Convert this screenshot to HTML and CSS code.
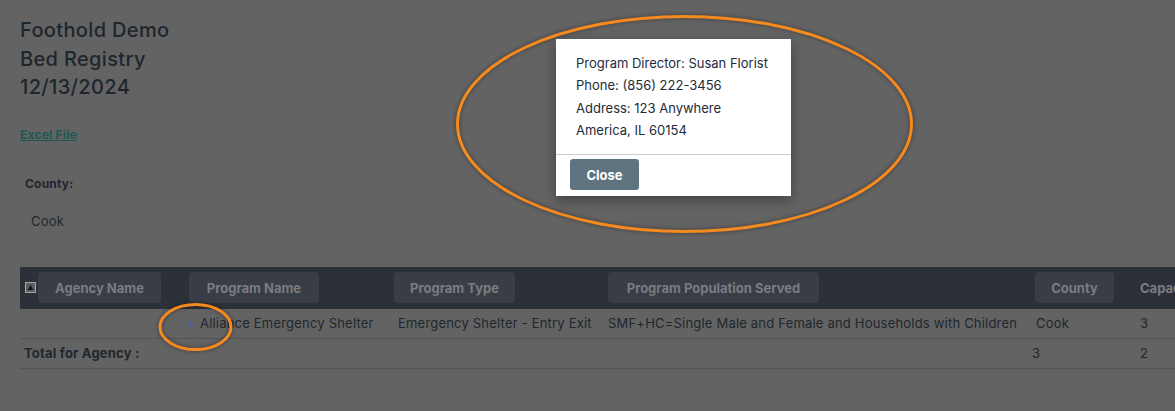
FILE: index.html
```html
<!DOCTYPE html>
<html>
<head>
<meta charset="utf-8">
<link rel="stylesheet" href="styles.css">
</head>
<body>
<div class="page">
  <div class="title">
    <div>Foothold Demo</div>
    <div>Bed Registry</div>
    <div>12/13/2024</div>
  </div>
  <a class="excel" href="#">Excel File</a>
  <div class="county-label">County:</div>
  <div class="county-value">Cook</div>

  <div class="grid">
    <div class="th c1">
      <span class="sort"><svg width="11" height="11" viewBox="0 0 11 11"><rect x="0.5" y="0.5" width="10" height="10" fill="#5a5d62" stroke="#a3a5a8"/><path d="M5.5 2.8 L8.3 8 L2.7 8 Z" fill="#141618"/></svg></span>
      <span class="btn b1">Agency Name</span>
    </div>
    <div class="th c2"><span class="btn b2">Program Name</span></div>
    <div class="th c3"><span class="btn b3">Program Type</span></div>
    <div class="th c4"><span class="btn b4">Program Population Served</span></div>
    <div class="th c5"><span class="btn b5">County</span></div>
    <div class="th c6"><span class="plain">Capacity</span></div>

    <div class="td c1"></div>
    <div class="td c2"><svg class="arrow" width="8" height="10" viewBox="0 0 8 10"><path d="M4 0.5 V8.5 M1.2 5.7 L4 8.5 L6.8 5.7" fill="none" stroke="#5562a0" stroke-width="1.3"/></svg>Alliance Emergency Shelter</div>
    <div class="td c3">Emergency Shelter - Entry Exit</div>
    <div class="td c4">SMF+HC=Single Male and Female and Households with Children</div>
    <div class="td c5 pad6">Cook</div>
    <div class="td c6">3</div>

    <div class="td total c1">Total for Agency :</div>
    <div class="td c2"></div>
    <div class="td c3 empty"></div>
    <div class="td c4"></div>
    <div class="td c5">3</div>
    <div class="td c6">2</div>
  </div>
</div>

<div class="modal">
  <div class="modal-body">
    <div>Program Director: Susan Florist</div>
    <div>Phone: (856) 222-3456</div>
    <div>Address: 123 Anywhere</div>
    <div>America, IL 60154</div>
  </div>
  <div class="modal-foot">
    <button class="close">Close</button>
  </div>
</div>

<svg class="annot" width="1175" height="411" viewBox="0 0 1175 411">
  <ellipse cx="684.5" cy="124" rx="227" ry="107.5" fill="none" stroke="#f68a1e" stroke-width="3"/>
  <ellipse cx="195.5" cy="327" rx="35.5" ry="22.5" fill="none" stroke="#f68a1e" stroke-width="3"/>
</svg>
</body>
</html>
```

FILE: styles.css
```css
html, body {
  margin: 0;
  padding: 0;
}
body {
  width: 1175px;
  height: 411px;
  overflow: hidden;
  background: #636363;
  font-family: Inter, "Open Sans", "Liberation Sans", sans-serif;
  color: #1f272e;
  position: relative;
}
.page {
  padding: 16px 0 0 20px;
}
.title {
  font-size: 20px;
  line-height: 28.5px;
  font-weight: 500;
  letter-spacing: 0.35px;
  color: #1e262d;
}
.excel {
  display: block;
  width: max-content;
  margin-top: 25px;
  font-size: 12px;
  line-height: 16px;
  font-weight: 700;
  letter-spacing: 0.2px;
  color: #1d5a52;
  text-decoration: underline;
}
.county-label {
  margin: 33px 0 0 5px;
  font-size: 12px;
  line-height: 16px;
  font-weight: 700;
  letter-spacing: 0.2px;
}
.county-value {
  margin: 21px 0 0 11px;
  font-size: 13px;
  line-height: 16px;
  letter-spacing: 0.2px;
}
.grid {
  margin-top: 38px;
  display: grid;
  grid-template-columns: 163px 207px 214px 427px 103px 120px;
  width: 1234px;
}
.th {
  background: #2c3139;
  height: 42px;
  display: flex;
  align-items: center;
  white-space: nowrap;
}
.th.c1 { padding-left: 5px; }
.th.c2 { padding-left: 6px; }
.th.c3 { padding-left: 4px; }
.th.c4 { padding-left: 4px; }
.th.c5 { padding-left: 4px; }
.th.c6 { padding-left: 6px; }
.sort {
  display: flex;
  margin-right: 2px;
}
.btn {
  height: 31px;
  border-radius: 4px;
  background: #393d45;
  color: #7a7c80;
  font-size: 13px;
  line-height: 16px;
  font-weight: 700;
  display: flex;
  align-items: center;
  justify-content: center;
}
.b1 { width: 123px; }
.b2 { width: 130px; }
.b3 { width: 121px; }
.b4 { width: 211px; }
.b5 { width: 79px; }
.plain {
  color: #7a7c80;
  font-size: 13px;
  line-height: 16px;
  font-weight: 700;
}
.td {
  height: 29px;
  border-bottom: 1px solid #545454;
  display: flex;
  align-items: center;
  font-size: 13px;
  line-height: 16px;
  letter-spacing: 0.2px;
  white-space: nowrap;
  color: #20272d;
  padding-left: 5px;
}
.td.c2 { padding-left: 4px; }
.td.c3 { padding-left: 8px; }
.td.c4 { padding-left: 4px; }
.td.c5 { padding-left: 1px; }
.td.pad6 { padding-left: 5px; }
.td.c6 { padding-left: 6px; }
.total {
  font-weight: 700;
  padding-left: 4px;
}
.arrow {
  margin-right: 5px;
}
.modal {
  position: absolute;
  left: 556px;
  top: 39px;
  width: 235px;
  background: #fff;
  box-shadow: 0 4px 12px rgba(0, 0, 0, 0.35);
  color: #1d2b3a;
}
.modal-body {
  padding: 13px 20px 13px 20px;
  font-size: 13px;
  line-height: 22.3px;
  border-bottom: 1px solid #c7ccd1;
}
.modal-foot {
  padding: 4px 14px 6px;
}
.close {
  display: block;
  width: 69px;
  height: 31px;
  border: none;
  border-radius: 3px;
  background: #5f7480;
  color: #fff;
  font-family: Inter, "Open Sans", "Liberation Sans", sans-serif;
  font-size: 13px;
  font-weight: 700;
  padding: 0;
}
.annot {
  position: absolute;
  left: 0;
  top: 0;
  pointer-events: none;
  filter: drop-shadow(0 0 2px rgba(0, 0, 0, 0.45));
}
```
